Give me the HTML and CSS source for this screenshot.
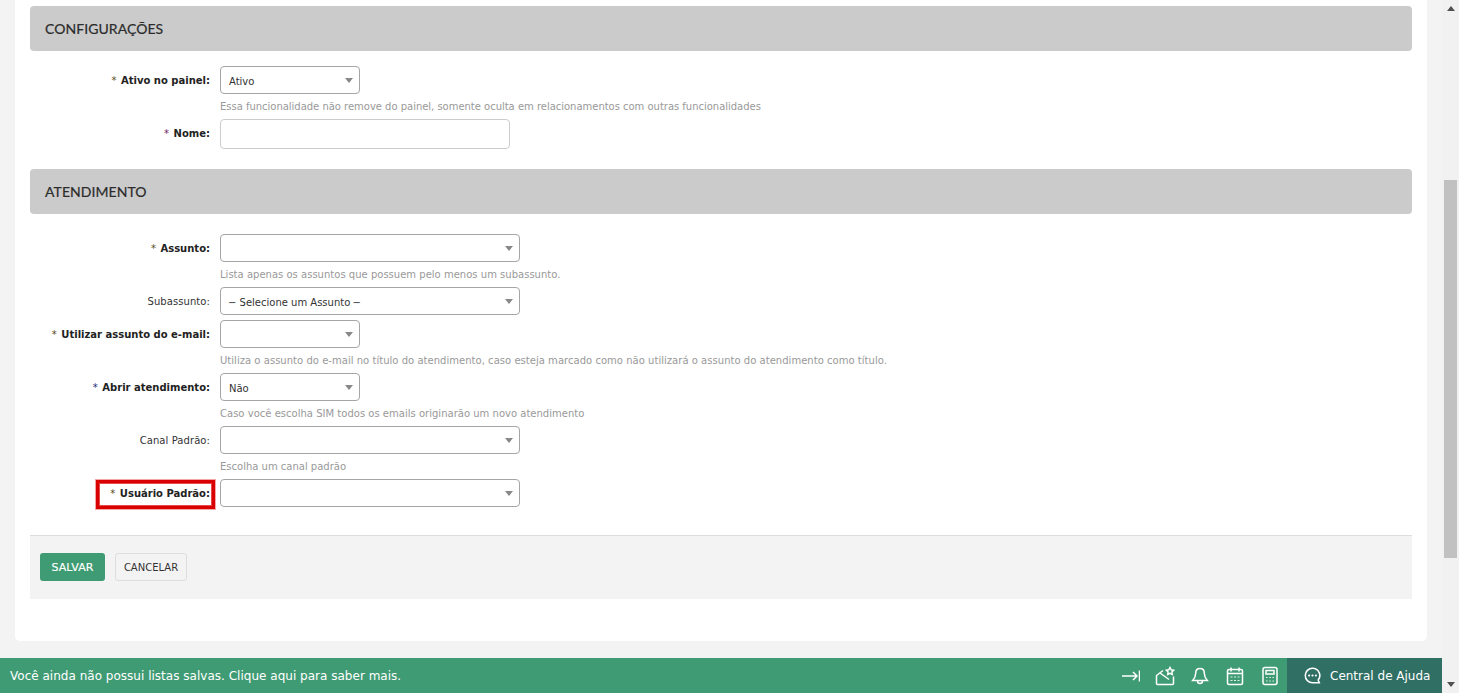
FILE: index.html
```html
<!DOCTYPE html>
<html lang="pt-BR">
<head>
<meta charset="utf-8">
<title>Configurações</title>
<link rel="stylesheet" href="styles.css">
</head>
<body>
<div class="app">
  <div class="viewport">
    <main class="content">
      <div class="sheet">
        <h2 class="section-title">CONFIGURAÇÕES</h2>
        <div class="fields fields-first">
          <div class="row">
            <label class="label required"><span class="star star-a">*</span> Ativo no painel:</label>
            <div class="control">
              <div class="select w-s">Ativo</div>
              <p class="help help-tight">Essa funcionalidade não remove do painel, somente oculta em relacionamentos com outras funcionalidades</p>
            </div>
          </div>
          <div class="row">
            <label class="label required"><span class="star star-b">*</span> Nome:</label>
            <div class="control"><div class="input"></div></div>
          </div>
        </div>
        <h2 class="section-title">ATENDIMENTO</h2>
        <div class="fields">
          <div class="row">
            <label class="label required"><span class="star star-a">*</span> Assunto:</label>
            <div class="control">
              <div class="select w-l"></div>
              <p class="help help-mid">Lista apenas os assuntos que possuem pelo menos um subassunto.</p>
            </div>
          </div>
          <div class="row">
            <label class="label">Subassunto:</label>
            <div class="control"><div class="select w-l"><span class="dash dash-open">−</span> Selecione um Assunto <span class="dash dash-close">−</span></div></div>
          </div>
          <div class="row">
            <label class="label required"><span class="star star-a">*</span> Utilizar assunto do e-mail:</label>
            <div class="control">
              <div class="select w-s"></div>
              <p class="help help-wide">Utiliza o assunto do e-mail no título do atendimento, caso esteja marcado como não utilizará o assunto do atendimento como título.</p>
            </div>
          </div>
          <div class="row">
            <label class="label required"><span class="star star-c">*</span> Abrir atendimento:</label>
            <div class="control">
              <div class="select w-s">Não</div>
              <p class="help help-mid">Caso você escolha SIM todos os emails originarão um novo atendimento</p>
            </div>
          </div>
          <div class="row">
            <label class="label">Canal Padrão:</label>
            <div class="control">
              <div class="select w-l"></div>
              <p class="help">Escolha um canal padrão</p>
            </div>
          </div>
          <div class="row">
            <label class="label required highlighted"><span class="star star-a">*</span> Usuário Padrão:</label>
            <div class="control"><div class="select w-l"></div></div>
          </div>
        </div>
        <div class="actions">
          <button class="btn btn-primary" type="button">SALVAR</button>
          <button class="btn btn-default" type="button">CANCELAR</button>
        </div>
      </div>
    </main>
    <footer class="bottombar">
      <span class="bar-message">Você ainda não possui listas salvas. Clique aqui para saber mais.</span>
      <div class="bar-icons">
        <svg class="bar-icon" viewBox="0 0 20 20"><path d="M2 10h15M13 6l4 4-4 4M19.500 4.500v11"/></svg>
        <svg class="bar-icon" viewBox="0 0 20 20"><path d="M8 4.500L1.500 9.500V17.500a1 1 0 0 0 1 1h15a1 1 0 0 0 1-1v-7M5 7l9 6.500"/><path d="M15 1.500l1.200 2.300 2.500.4-1.800 1.800.4 2.500-2.300-1.200-2.300 1.200.4-2.500-1.800-1.800 2.500-.4z"/></svg>
        <svg class="bar-icon" viewBox="0 0 20 20"><path d="M10 2.500c2.600 0 4.300 2 4.300 4.700 0 3 .8 4.800 3 7.300H2.700c2.200-2.500 3-4.300 3-7.300C5.700 4.500 7.400 2.500 10 2.500zM7.500 15c0 3.300 5 3.300 5 0"/></svg>
        <svg class="bar-icon" viewBox="0 0 20 20"><rect x="2.500" y="3.500" width="15" height="15" rx="1.500"/><path d="M2.500 7.500h15M6 1.500v4M14 1.500v4"/><path class="bar-dots" d="M5.500 11h2M9 11h2M12.500 11h2M5.500 14.500h2M9 14.500h2M12.500 14.500h2"/></svg>
        <svg class="bar-icon" viewBox="0 0 20 20"><rect x="3" y="1.500" width="14" height="17" rx="2"/><rect x="6" y="4.500" width="8" height="3.500"/><path class="bar-dots" d="M6 11.500h1.500M9.300 11.500h1.500M12.500 11.500h1.500M6 15h1.500M9.300 15h1.500M12.500 15h1.500"/></svg>
      </div>
      <a class="help-center">
        <svg class="help-icon" viewBox="0 0 20 20"><path d="M10 1.500a8.500 8.500 0 1 0 0 17h8l-1.300-3.200A8.500 8.500 0 0 0 10 1.500z"/><path class="dots" d="M6 10h.01M10 10h.01M14 10h.01"/></svg>
        Central de Ajuda
      </a>
    </footer>
  </div>
  <aside class="scrollbar">
    <span class="arrow arrow-up"></span>
    <div class="track"><div class="thumb"></div></div>
    <span class="arrow arrow-down"></span>
  </aside>
</div>
</body>
</html>
```
FILE: styles.css
```css
* { box-sizing: border-box; }
html, body { margin: 0; height: 100%; overflow: hidden; }
body { background: #f3f3f3; font-family: "DejaVu Sans", Verdana, sans-serif; font-size: 10px; color: #222; }
.app { display: flex; height: 693px; }
.viewport { width: 1442px; display: flex; flex-direction: column; }
.content { flex: 1; padding: 0 15px 17px; min-height: 0; }
.sheet { height: 641px; background: #fff; border-radius: 0 0 5px 5px; padding: 6px 15px 0; }
.section-title { margin: 0; height: 45px; padding-left: 15px; background: #cbcbcb; border-radius: 4px; font: 400 14px/45px Lato, sans-serif; letter-spacing: .06px; color: #2b2b2b; -webkit-text-stroke: .2px #2b2b2b; }
.fields { padding: 20px 0 23px; }
.fields-first { padding: 15px 0 15px; }
.row { display: flex; margin-bottom: 5px; }
.label { width: 180px; margin-right: 10px; padding-top: 8px; text-align: right; line-height: 14px; white-space: nowrap; color: #333; position: relative; letter-spacing: .08px; }
.required { font-weight: 700; color: #222; letter-spacing: 0; }
.star { font-weight: 400; margin-right: 1px; }
.star-a { color: #5a4a1a; }
.star-b { color: #6a1a6a; }
.star-c { color: #1a2a7a; }
.highlighted::after { content: ""; position: absolute; left: 65px; right: -6px; top: 0; height: 29px; border: 1px solid #f2a6a6; box-shadow: inset 0 0 0 3px #d90000, inset 0 0 0 4px #e84a4a; }
.control { flex: 1; }
.select, .input { background: #fff; border-radius: 4px; }
.select { height: 28px; border: 1px solid #a5a5a5; padding: 1px 8px 0; line-height: 28px; position: relative; color: #333; }
.select::after { content: ""; position: absolute; right: 6px; top: 11px; border-style: solid; border-width: 5px 4px 0; border-color: #888 transparent transparent; }
.dash { display: inline-block; }
.dash-open { margin-left: -1px; }
.dash-close { margin-left: -1px; }
.w-s { width: 140px; }
.w-l { width: 300px; }
.input { width: 290px; height: 30px; border: 1px solid #ccc; }
.help { margin: 0; padding-top: 5px; height: 20px; line-height: 15px; color: #999; white-space: nowrap; }
.help-tight { letter-spacing: -.02px; }
.help-mid { letter-spacing: .015px; }
.help-wide { letter-spacing: .03px; }
.actions { height: 64px; background: #f3f3f3; border-top: 1px solid #ddd; padding: 17px 10px 0; display: flex; gap: 10px; align-items: flex-start; }
.btn { height: 28px; border-radius: 3px; font-family: "DejaVu Sans", Verdana, sans-serif; padding: 0; }
.btn-primary { width: 65px; background: #3f9b74; border: 0; color: #fff; font-size: 11px; letter-spacing: .05px; -webkit-text-stroke: .15px #fff; }
.btn-default { width: 72px; background: #f3f3f3; border: 1px solid #ddd; color: #333; font-size: 10px; }
.bottombar { height: 35px; flex: none; background: #3f9b74; color: #fff; display: flex; align-items: center; padding-left: 10px; }
.bar-message { flex: 1; font-size: 12px; letter-spacing: .015px; }
.bar-icons { display: flex; gap: 15px; padding-right: 7px; }
.bar-icon { width: 20px; height: 20px; fill: none; stroke: #fff; stroke-width: 1.500; }
.bar-dots { stroke-width: 1.200; opacity: .85; }
.help-center { width: 155px; height: 35px; background: #2f6f64; display: flex; align-items: center; gap: 9px; padding-left: 17px; font-size: 12px; }
.help-icon { width: 17px; height: 17px; fill: none; stroke: #fff; stroke-width: 1.800; }
.help-icon .dots { stroke-width: 2.600; stroke-linecap: round; }
.scrollbar { width: 17px; background: #f1f1f1; display: flex; flex-direction: column; align-items: center; }
.arrow { width: 0; height: 0; flex: none; border-style: solid; border-color: transparent; }
.arrow-up { margin-top: 6px; border-width: 0 4px 5px; border-bottom-color: #505050; }
.arrow-down { margin-bottom: 6px; border-width: 5px 4px 0; border-top-color: #505050; }
.track { flex: 1; width: 100%; padding: 169px 2px 0; }
.thumb { height: 378px; background: #c1c1c1; }
```
